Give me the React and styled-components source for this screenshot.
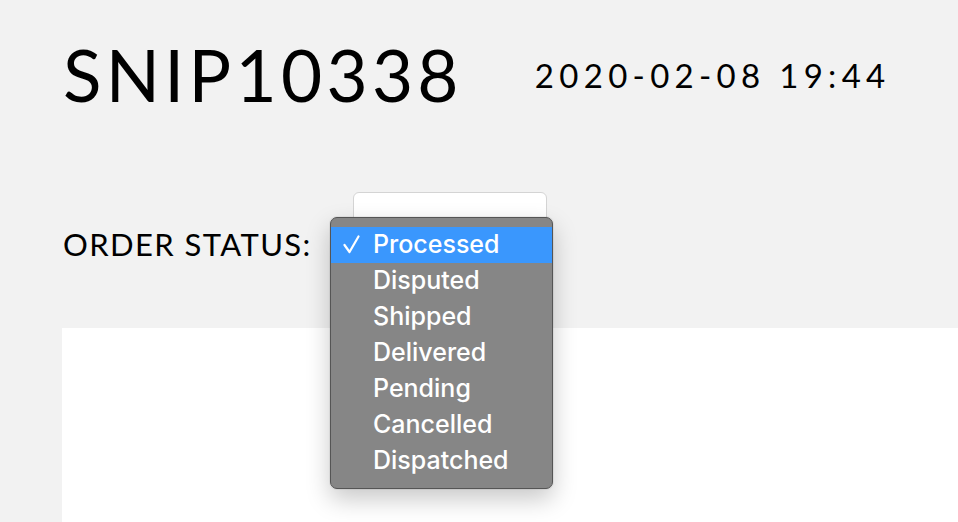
import React from "react";
import styled, { createGlobalStyle } from "styled-components";

const GlobalStyle = createGlobalStyle`
  html, body {
    margin: 0;
    padding: 0;
    background: #f2f2f2;
    overflow: hidden;
  }
`;

const Page = styled.div`
  font-family: "Lato", "Liberation Sans", sans-serif;
  color: #000;
  padding: 30px 0 0 63px;
  height: 522px;
  box-sizing: border-box;
  overflow: hidden;
`;

const Header = styled.div`
  display: flex;
  align-items: center;
  gap: 72px;
`;

const Title = styled.h1`
  margin: 0;
  font-size: 71px;
  font-weight: 400;
  letter-spacing: 4.3px;
  line-height: 90px;
`;

const Stamp = styled.span`
  font-size: 33px;
  letter-spacing: 5.3px;
`;

const StatusRow = styled.div`
  display: flex;
  align-items: center;
  margin-top: 72px;
`;

const Label = styled.span`
  font-size: 31px;
  letter-spacing: 1.4px;
  width: 290px;
`;

const SelectWrap = styled.div`
  position: relative;
`;

const SelectBox = styled.div`
  width: 194px;
  height: 104px;
  box-sizing: border-box;
  background: #fff;
  border: 1px solid #d4d4d4;
  border-radius: 6px;
`;

const Popup = styled.ul`
  position: absolute;
  left: -23px;
  top: 25px;
  width: 223px;
  margin: 0;
  padding: 9px 0;
  list-style: none;
  box-sizing: border-box;
  background: #868686;
  border: 1px solid #555;
  border-radius: 7px;
  box-shadow: 0 10px 24px rgba(0, 0, 0, 0.22), 0 0 0 1px rgba(0, 0, 0, 0.05);
  z-index: 10;
`;

const Option = styled.li`
  position: relative;
  height: 36px;
  line-height: 35px;
  padding-left: 42px;
  font-family: "Inter", "Noto Sans", sans-serif;
  font-size: 25px;
  font-weight: 500;
  color: #fff;
  background: ${(p) => (p.$active ? "#3a97fd" : "transparent")};
`;

const Check = styled.svg`
  position: absolute;
  left: 12px;
  top: 8px;
`;

const Panel = styled.div`
  background: #fff;
  margin: 32px 0 0 -1px;
  height: 300px;
`;

const statuses = [
  "Processed",
  "Disputed",
  "Shipped",
  "Delivered",
  "Pending",
  "Cancelled",
  "Dispatched",
];

export default function App() {
  const selected = "Processed";
  return (
    <Page>
      <GlobalStyle />
      <Header>
        <Title>SNIP10338</Title>
        <Stamp>2020-02-08 19:44</Stamp>
      </Header>
      <StatusRow>
        <Label>ORDER STATUS:</Label>
        <SelectWrap>
          <SelectBox />
          <Popup>
            {statuses.map((s) => (
              <Option key={s} $active={s === selected}>
                {s === selected && (
                  <Check width="17" height="19" viewBox="0 0 17 19">
                    <polyline
                      points="1.5,10 6.5,17 15.5,1.5"
                      fill="none"
                      stroke="#fff"
                      strokeWidth="2.2"
                      strokeLinecap="round"
                      strokeLinejoin="round"
                    />
                  </Check>
                )}
                {s}
              </Option>
            ))}
          </Popup>
        </SelectWrap>
      </StatusRow>
      <Panel />
    </Page>
  );
}
